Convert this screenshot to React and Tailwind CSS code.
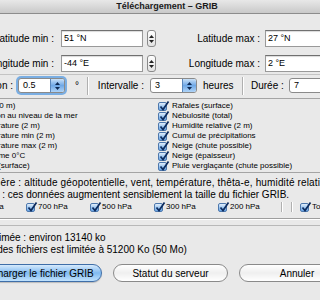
import React from "react";

const Arrows = ({ color }) => (
  <>
    <svg width="5" height="3" className="block">
      <path d="M0 3 L2.5 0 L5 3Z" fill={color} />
    </svg>
    <svg width="5" height="3" className="block">
      <path d="M0 0 L2.5 3 L5 0Z" fill={color} />
    </svg>
  </>
);

const Stepper = () => (
  <div className="ml-[4px] w-[9px] h-[17px] shrink-0 rounded-[3px] border border-[#8a8a8a] bg-linear-to-b from-white to-[#e2e2e2] flex flex-col items-center justify-center gap-[2px]">
    <Arrows color="#222" />
  </div>
);

const Field = ({ value, className }) => (
  <div className={"w-[82px] h-[17px] shrink-0 border border-[#999] border-t-[#707070] bg-white pl-[2px] text-[9px] flex items-center shadow-[inset_0_1px_1px_rgba(0,0,0,0.15)] " + className}>
    {value}
  </div>
);

const Combo = ({ value, focus }) => (
  <div
    className={
      "flex h-[15px] w-[47px] shrink-0 rounded-[3px] border border-[#8a8a8a] bg-white overflow-hidden" +
      (focus ? " ring-2 ring-[#7aaee3]" : "")
    }
  >
    <span className="flex-1 pl-[4px] text-[9px] leading-[13px]">{value}</span>
    <span className="w-[14px] border-l border-[#5a86bb] bg-linear-to-b from-[#c9e0f7] via-[#6fa8e6] to-[#aed3f7] flex flex-col items-center justify-center gap-[2px]">
      <Arrows color="#0e2a55" />
    </span>
  </div>
);

const Check = () => (
  <span className="relative block w-[9px] h-[9px] shrink-0 rounded-[2px] border border-[#4d78ad] bg-linear-to-b from-[#e2eefb] via-[#9fc8f1] to-[#6aa5e6]">
    <svg viewBox="0 0 10 10" className="absolute left-[0px] top-[-2px] w-[10px] h-[10px] overflow-visible">
      <path d="M1.5 5.5 L4 8.5 L9.5 0.5" fill="none" stroke="#0d2b5e" strokeWidth="1.7" />
    </svg>
  </span>
);

const VSep = ({ className }) => (
  <span className={"block w-px shrink-0 bg-[#b0b0b0] shadow-[1px_0_0_#fff] " + className} />
);

const left = [
  "Vent (10 m)",
  "Pression au niveau de la mer",
  "Température (2 m)",
  "Température min (2 m)",
  "Température max (2 m)",
  "Isotherme 0°C",
  "CAPE (surface)",
];

const right = [
  "Rafales (surface)",
  "Nébulosité (total)",
  "Humidité relative (2 m)",
  "Cumul de précipitations",
  "Neige (chute possible)",
  "Neige (épaisseur)",
  "Pluie verglaçante (chute possible)",
];

const levels = ["850 hPa", "700 hPa", "500 hPa", "300 hPa", "200 hPa"];

export default function App() {
  return (
    <div className="w-[320px] h-[300px] overflow-hidden bg-[#e9e9e9] font-['Liberation_Sans',Arial,sans-serif] text-black">
      <div className="ml-[-46px] w-[426px]">
        {/* barre de titre */}
        <div className="h-[14px] border-b border-[#8c8c8c] bg-linear-to-b from-[#e8e8e8] to-[#c9c9c9] flex items-center justify-center text-[9px] font-bold leading-none text-[#1a1a1a]">
          Téléchargement – GRIB
        </div>

        {/* latitudes */}
        <div className="mt-[16px] flex items-center h-[17px] text-[10px]">
          <span className="w-[100px] text-right whitespace-nowrap">Latitude min :</span>
          <Field value="51 °N" className="ml-[7px]" />
          <Stepper />
          <span className="w-[104px] text-right whitespace-nowrap">Latitude max :</span>
          <Field value="27 °N" className="ml-[5px]" />
          <Stepper />
        </div>

        {/* longitudes */}
        <div className="mt-[8px] flex items-center h-[17px] text-[10px]">
          <span className="w-[100px] text-right whitespace-nowrap">Longitude min :</span>
          <Field value="-44 °E" className="ml-[7px]" />
          <Stepper />
          <span className="w-[104px] text-right whitespace-nowrap">Longitude max :</span>
          <Field value="2 °E" className="ml-[5px]" />
          <Stepper />
        </div>

        <div className="mt-[2px] h-px bg-[#c4c4c4]" />

        {/* résolution / intervalle / durée */}
        <div className="mt-[3px] flex items-center h-[15px] text-[10px]">
          <span className="w-[59px] text-right whitespace-nowrap">Résolution :</span>
          <span className="ml-[5px]">
            <Combo value="0.5" focus />
          </span>
          <span className="ml-[10px] w-[12px]">°</span>
          <VSep className="h-[18px]" />
          <span className="w-[56px] text-right whitespace-nowrap">Intervalle :</span>
          <span className="ml-[6px]">
            <Combo value="3" />
          </span>
          <span className="ml-[6px] w-[39px]">heures</span>
          <VSep className="h-[18px]" />
          <span className="ml-[8px] w-[38px] whitespace-nowrap">Durée :</span>
          <Combo value="7" />
        </div>

        {/* données */}
        <div className="mt-[5px] border-y border-[#a4a4a4] pt-[2px] pb-[1px] pl-[6px] grid grid-cols-[198px_auto] grid-flow-col grid-rows-7 text-[8px]">
          {left.concat(right).map((t) => (
            <div key={t} className="h-[10px] flex items-center gap-[5px] whitespace-nowrap">
              <Check />
              <span>{t}</span>
            </div>
          ))}
        </div>

        <div className="mt-[4px] pl-[6px] text-[10px] leading-[12px] whitespace-nowrap">
          <p className="tracking-[0.15px]">Atmosphère : altitude géopotentielle, vent, température, thêta-e, humidité relative.</p>
          <p>Attention : ces données augmentent sensiblement la taille du fichier GRIB.</p>
        </div>

        <div className="h-[12px] pl-[8px] flex items-center text-[8px] whitespace-nowrap">
          {levels.map((l, i) => (
            <div key={l} className={(i === 4 ? "w-[63px]" : "w-[64px]") + " flex items-center gap-[3px]"}>
              <Check />
              <span>{l}</span>
            </div>
          ))}
          <VSep className="h-[10px]" />
          <VSep className="ml-[9px] h-[10px]" />
          <div className="ml-[8px] flex items-center gap-[3px]">
            <Check />
            <span>Tout</span>
          </div>
        </div>

        <div className="mt-[5px] h-px bg-[#9e9e9e] shadow-[0_1px_0_#fff]" />
        <div className="mt-[6px] h-px bg-[#b8b8b8]" />

        <div className="mt-[6px] pl-[6px] text-[10px] leading-[12px] whitespace-nowrap">
          <p>Taille estimée : environ 13140 ko</p>
          <p>La taille des fichiers est limitée à 51200 Ko (50 Mo)</p>
        </div>

        <div className="mt-[8px] pl-[11px] flex gap-[11px] text-[10px]">
          <button className="w-[137px] h-[18px] rounded-full border border-[#3f6ea8] bg-linear-to-b from-[#d6eafc] via-[#80baf0] to-[#c0e2fd] shadow-[0_1px_1px_rgba(0,0,0,0.2)]">
            Télécharger le fichier GRIB
          </button>
          <button className="w-[115px] h-[18px] rounded-full border border-[#8a8a8a] bg-linear-to-b from-white via-[#efefef] to-white">
            Statut du serveur
          </button>
          <button className="w-[116px] h-[18px] rounded-full border border-[#8a8a8a] bg-linear-to-b from-white via-[#efefef] to-white">
            Annuler
          </button>
        </div>
      </div>
    </div>
  );
}
